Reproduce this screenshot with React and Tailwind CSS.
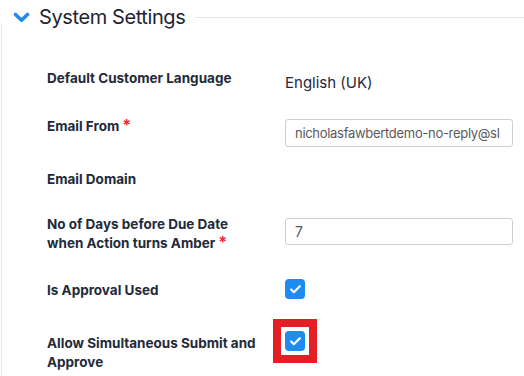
import { Check } from 'lucide-react';

const font = { fontFamily: 'Inter, "Noto Sans", sans-serif' };

function Label({ children, required, className = '' }) {
  return (
    <div className={`w-[238px] shrink-0 pr-[22px] text-[13.5px] font-bold leading-[19px] text-[#222a3a] ${className}`}>
      {children}
      {required && <span className="ml-[3px] text-[16px] leading-none text-[#ec2530]">*</span>}
    </div>
  );
}

function Box() {
  return (
    <span className="flex h-[20px] w-[20px] items-center justify-center rounded-[4px] bg-[#1e8bf0]">
      <Check className="h-[13px] w-[13px] text-white" strokeWidth={4} />
    </span>
  );
}

export default function App() {
  return (
    <div className="h-[376px] w-[524px] overflow-hidden bg-white" style={font}>
      <div className="relative -mb-[11px] flex h-[34px] items-center pl-[13px]">
        <svg width="17" height="11" viewBox="0 0 17 11" className="text-[#2589ea]">
          <path d="M2.5 2.5 L8.5 8.2 L14.5 2.5" fill="none" stroke="currentColor" strokeWidth="3.6" strokeLinecap="round" strokeLinejoin="round" />
        </svg>
        <span className="ml-[9px] text-[20px] leading-none tracking-[-0.4px] text-[#1f2433]">System Settings</span>
        <div className="ml-[10px] h-px flex-1 bg-[#e3e3e3]" />
      </div>
      <div className="ml-[1px] h-[400px] border-l border-[#e6e6e6] pl-[45px] pt-[46px]">
        <div className="flex items-start">
          <Label>Default Customer Language</Label>
          <span className="mt-[4px] text-[15px] leading-[20px] text-[#222a3a]">English (UK)</span>
        </div>
        <div className="mt-[24px] flex items-start">
          <Label required>Email From</Label>
          <div className="mt-[2px] h-[28px] w-[228px] overflow-hidden rounded-[3px] border border-[#cfcfcf] pl-[9px] text-[13px] leading-[26px] tracking-[-0.3px] whitespace-nowrap text-[#5a5a5a]">
            nicholasfawbertdemo-no-reply@sl
          </div>
        </div>
        <div className="mt-[23px] flex items-start">
          <Label>Email Domain</Label>
        </div>
        <div className="mt-[26px] flex items-start">
          <Label required>No of Days before Due Date when Action turns Amber</Label>
          <div className="mt-[3px] h-[27px] w-[228px] rounded-[3px] border border-[#cfcfcf] pl-[9px] text-[14px] leading-[25px] text-[#5a5a5a]">
            7
          </div>
        </div>
        <div className="mt-[26px] flex items-start">
          <Label className="mt-[2px]">Is Approval Used</Label>
          <Box />
        </div>
        <div className="mt-[19px] flex items-start">
          <Label className="mt-[15px]">Allow Simultaneous Submit and Approve</Label>
          <div className="-ml-[12px] border-[8px] border-[#e31e24] p-[4px]">
            <Box />
          </div>
        </div>
      </div>
    </div>
  );
}
